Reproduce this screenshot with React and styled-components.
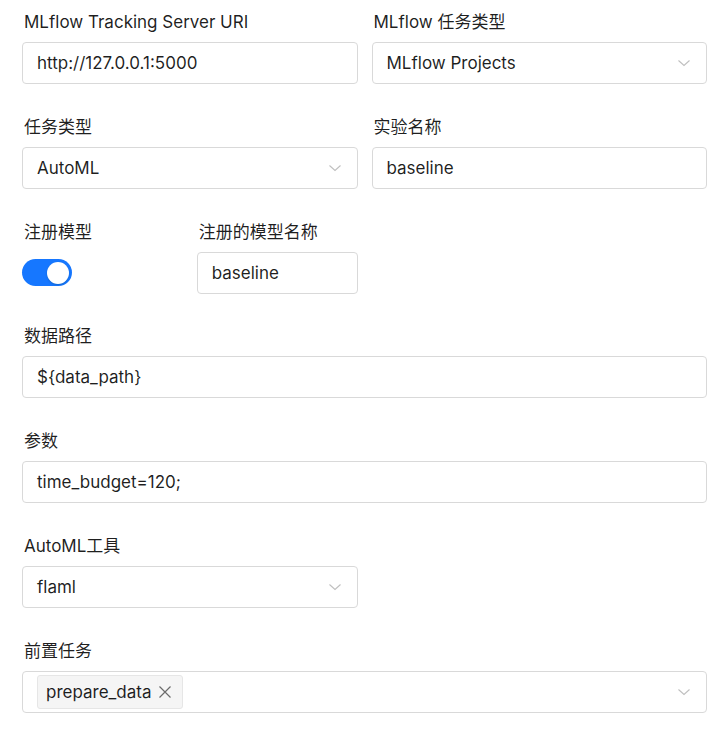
import styled, { createGlobalStyle } from "styled-components";

const GlobalStyle = createGlobalStyle`
  * { box-sizing: border-box; }
  body {
    margin: 0;
    background: #ffffff;
    font-family: Inter, "Noto Sans CJK SC", sans-serif;
    color: rgba(0, 0, 0, 0.88);
  }
`;

const Form = styled.div`
  width: 685px;
  margin-left: 22px;
  padding-top: 11px;
`;

const Row = styled.div`
  display: grid;
  grid-template-columns: 1fr 1fr;
  column-gap: 14px;
`;

const Item = styled.div`
  margin-bottom: ${(p) => (p.$nested ? "0" : "31.8px")};
  min-width: 0;
`;

const Label = styled.div`
  font-size: 17px;
  line-height: 22px;
  height: 22px;
  margin-bottom: 9px;
  padding-left: 2px;
  color: rgba(0, 0, 0, 0.88);
  white-space: nowrap;
`;

const Box = styled.div`
  height: 42px;
  border: 1px solid #d9d9d9;
  border-radius: 4px;
  background: #fff;
  display: flex;
  align-items: center;
  padding: 0 15px 0 14px;
  font-size: 17px;
  color: rgba(0, 0, 0, 0.88);
`;

const Value = styled.span`
  flex: 1;
  white-space: nowrap;
`;

const Tags = styled.div`
  flex: 1;
  display: flex;
  align-items: center;
`;

const Tag = styled.span`
  display: inline-flex;
  align-items: center;
  height: 34px;
  padding: 0 10px 0 8px;
  background: #f5f5f5;
  border: 1px solid #e6e6e6;
  border-radius: 3px;
  font-size: 17px;
  gap: 6px;
`;

const SwitchBox = styled.div`
  height: 42px;
  display: flex;
  align-items: center;
`;

const Switch = styled.div`
  width: 50px;
  height: 27px;
  border-radius: 14px;
  background: #1677ff;
  display: flex;
  align-items: center;
  justify-content: flex-end;
  padding: 0 3px;
`;

const Knob = styled.span`
  width: 22px;
  height: 22px;
  border-radius: 50%;
  background: #fff;
  box-shadow: 0 1px 2px rgba(0, 35, 11, 0.2);
`;

const Chevron = () => (
  <svg width="14" height="14" viewBox="0 0 14 14" fill="none">
    <path d="M1.5 4.5 L7 9.5 L12.5 4.5" stroke="#bfbfbf" strokeWidth="1.1" />
  </svg>
);

const Close = () => (
  <svg width="14" height="14" viewBox="0 0 14 14" fill="none">
    <path d="M1.5 1.5 L12.5 12.5 M12.5 1.5 L1.5 12.5" stroke="#6b6b6b" strokeWidth="1.2" />
  </svg>
);

const Input = ({ value }) => (
  <Box>
    <Value>{value}</Value>
  </Box>
);

const Select = ({ value }) => (
  <Box>
    <Value>{value}</Value>
    <Chevron />
  </Box>
);

export default function App() {
  return (
    <>
      <GlobalStyle />
      <Form>
        <Row>
          <Item>
            <Label>MLflow Tracking Server URI</Label>
            <Input value="http://127.0.0.1:5000" />
          </Item>
          <Item>
            <Label>MLflow 任务类型</Label>
            <Select value="MLflow Projects" />
          </Item>
        </Row>
        <Row>
          <Item>
            <Label>任务类型</Label>
            <Select value="AutoML" />
          </Item>
          <Item>
            <Label>实验名称</Label>
            <Input value="baseline" />
          </Item>
        </Row>
        <Row>
          <Item>
            <Row>
              <Item $nested>
                <Label>注册模型</Label>
                <SwitchBox>
                  <Switch>
                    <Knob />
                  </Switch>
                </SwitchBox>
              </Item>
              <Item $nested>
                <Label>注册的模型名称</Label>
                <Input value="baseline" />
              </Item>
            </Row>
          </Item>
        </Row>
        <Item>
          <Label>数据路径</Label>
          <Input value="${data_path}" />
        </Item>
        <Item>
          <Label>参数</Label>
          <Input value="time_budget=120;" />
        </Item>
        <Row>
          <Item>
            <Label>AutoML工具</Label>
            <Select value="flaml" />
          </Item>
        </Row>
        <Item>
          <Label>前置任务</Label>
          <Box>
            <Tags>
              <Tag>
                prepare_data
                <Close />
              </Tag>
            </Tags>
            <Chevron />
          </Box>
        </Item>
      </Form>
    </>
  );
}
